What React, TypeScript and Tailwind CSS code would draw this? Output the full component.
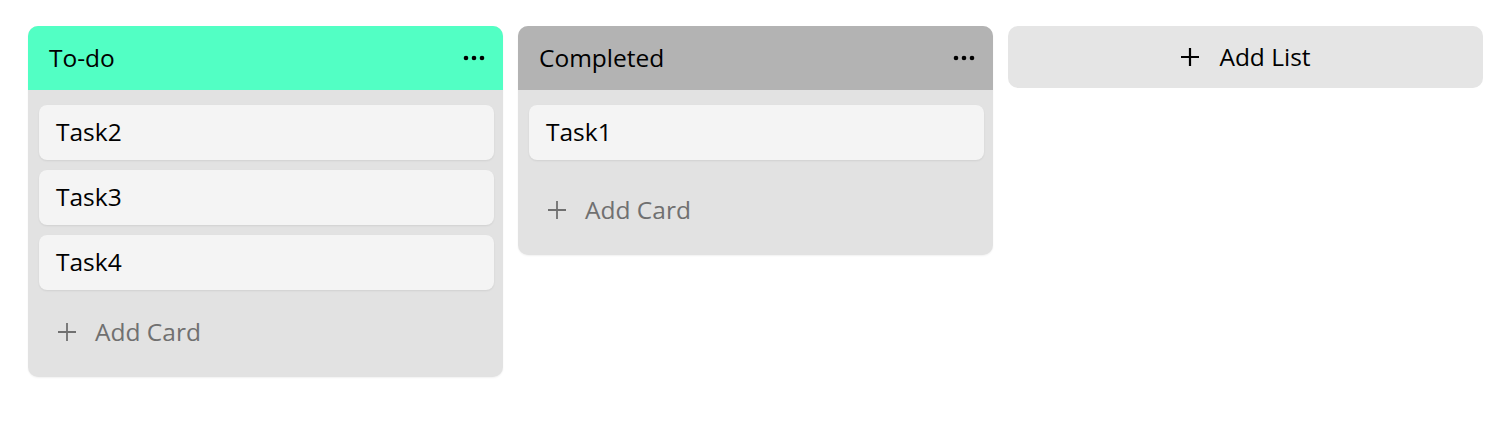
type List = { title: string; header: string; cards: string[] }

const lists: List[] = [
    { title: "To-do", header: "bg-[#52ffc4]", cards: ["Task2", "Task3", "Task4"] },
    { title: "Completed", header: "bg-[#b3b3b3]", cards: ["Task1"] },
]

function Dots() {
    return (
        <svg width="22" height="6" viewBox="0 0 22 6" className="text-black">
            <circle cx="3" cy="3" r="2.3" fill="currentColor" />
            <circle cx="11" cy="3" r="2.3" fill="currentColor" />
            <circle cx="19" cy="3" r="2.3" fill="currentColor" />
        </svg>
    )
}

function PlusIcon({ weight }: { weight: number }) {
    return (
        <svg width="20" height="20" viewBox="0 0 20 20" fill="none" stroke="currentColor" strokeWidth={weight}>
            <path d="M10 1v18M1 10h18" />
        </svg>
    )
}

export default function App() {
    return (
        <div
            className="min-h-screen bg-white pl-[28px] pr-[27px] pt-[26px] text-[24.5px] text-black"
            style={{ fontFamily: '"Open Sans", "Noto Sans", sans-serif' }}
        >
            <div className="flex items-start gap-[15px]">
                {lists.map((list) => (
                    <div key={list.title} className="flex-1 rounded-[10px] bg-[#e2e2e2] shadow-[0_1px_2px_rgba(0,0,0,0.06)]">
                        {/* Header */}
                        <div className={`flex h-[64px] items-center justify-between rounded-t-[10px] pl-[21px] pr-[18px] ${list.header}`}>
                            <span>{list.title}</span>
                            <Dots />
                        </div>

                        {/* Cards */}
                        <div className="flex min-h-[88px] flex-col gap-[10px] pl-[11px] pr-[9px] pt-[15px] pb-[10px]">
                            {list.cards.map((c) => (
                                <div
                                    key={c}
                                    className="flex h-[55px] items-center rounded-[8px] bg-[#f4f4f4] pl-[17px] shadow-[0_1px_2px_rgba(0,0,0,0.08)]"
                                >
                                    {c}
                                </div>
                            ))}
                        </div>

                        {/* Add card */}
                        <div className="mb-[13px] flex h-[64px] items-center gap-[18px] pl-[29px] text-[#707070]">
                            <PlusIcon weight={1.8} />
                            <span>Add Card</span>
                        </div>
                    </div>
                ))}

                <button className="flex h-[62px] flex-1 items-center justify-center gap-[19px] rounded-[10px] bg-[#e5e5e5]">
                    <PlusIcon weight={2.2} />
                    <span>Add List</span>
                </button>
            </div>
        </div>
    )
}
